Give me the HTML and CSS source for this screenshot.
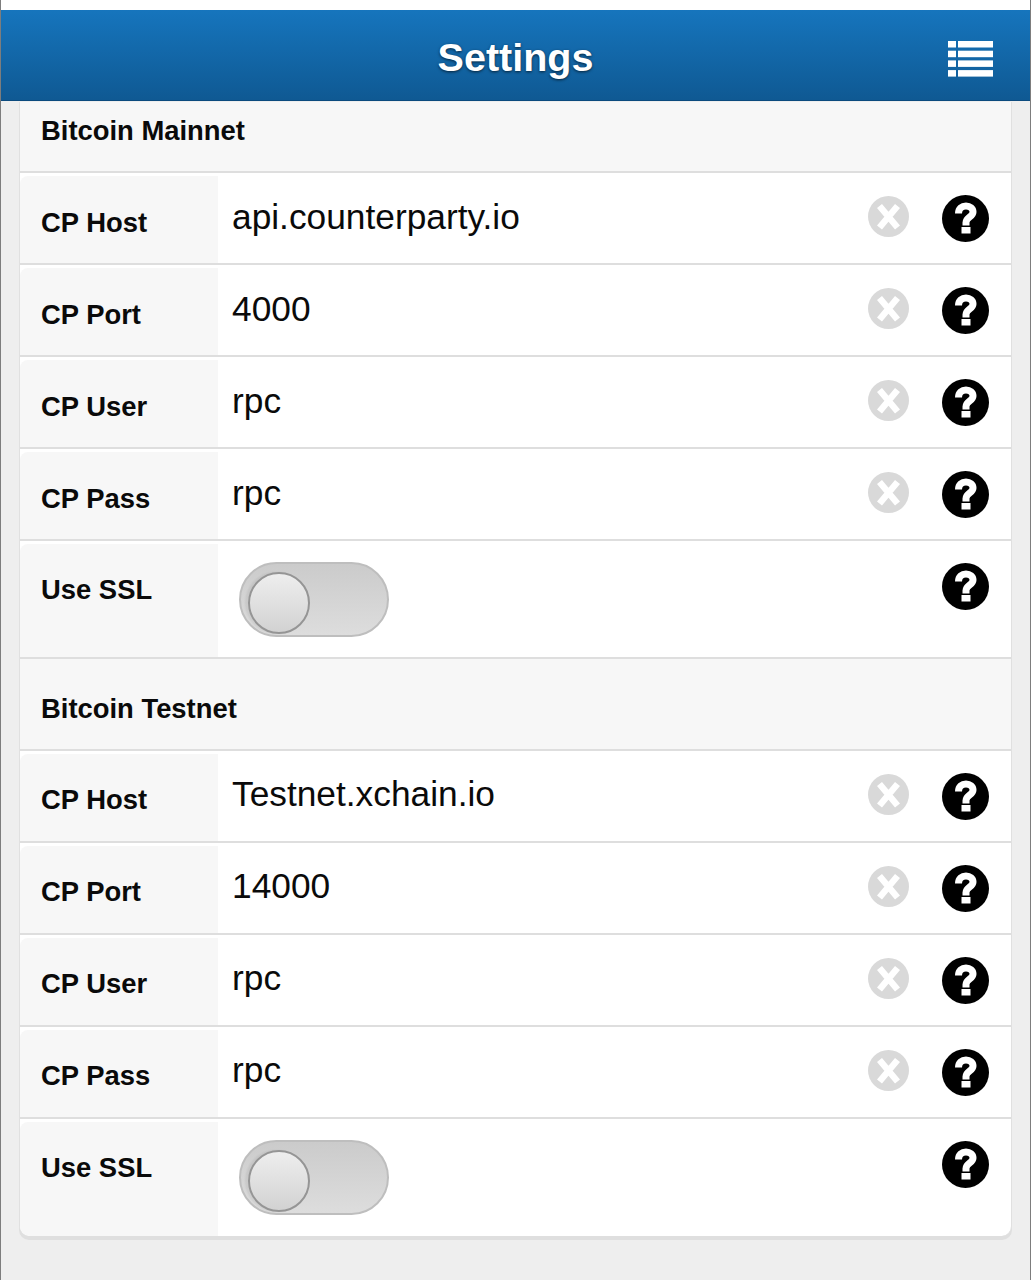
FILE: index.html
```html
<!DOCTYPE html>
<html lang="en">
<head>
    <meta charset="UTF-8">
    <meta name="viewport" content="width=device-width, initial-scale=1.0">
    <title>Settings</title>
    <link rel="stylesheet" href="styles.css">
</head>
<body>
    <svg class="defs" width="0" height="0">
        <symbol id="icon-clear" viewBox="0 0 41 41">
            <circle cx="20.5" cy="20.5" r="20.5" fill="#d9d9d9"/>
            <path d="M11.5 10 L29.5 31.5 M29.5 10 L11.5 31.5" stroke="#fff" stroke-width="6.5" fill="none"/>
        </symbol>
        <symbol id="icon-help" viewBox="0 0 47 47">
            <circle cx="23.5" cy="23.5" r="23.5" fill="#000"/>
            <path d="M16.5 18.5 C16.5 13.5 20 11 24 11 C28 11 31 13.5 31 17 C31 22 24 22 24 27.5 V30.5" stroke="#fff" stroke-width="7" fill="none"/>
            <rect x="19.5" y="32" width="9" height="6.5" fill="#fff"/>
        </symbol>
    </svg>

    <header class="topbar">
        <h1>Settings</h1>
        <svg class="list-icon" width="45" height="36" viewBox="0 0 45 36" fill="#fff">
            <rect x="0" y="0" width="8" height="6.5"/>
            <rect x="0" y="9.7" width="8" height="6.5"/>
            <rect x="0" y="19.4" width="8" height="6.5"/>
            <rect x="0" y="29.1" width="8" height="6.5"/>
            <rect x="10" y="0" width="35" height="6.5"/>
            <rect x="10" y="9.7" width="35" height="6.5"/>
            <rect x="10" y="19.4" width="35" height="6.5"/>
            <rect x="10" y="29.1" width="35" height="6.5"/>
        </svg>
    </header>

    <main class="card">
        <div class="section-title first">Bitcoin Mainnet</div>
        <div class="row">
            <div class="label">CP Host</div>
            <div class="value">api.counterparty.io</div>
            <svg class="clear"><use href="#icon-clear"/></svg>
            <svg class="help"><use href="#icon-help"/></svg>
        </div>
        <div class="row">
            <div class="label">CP Port</div>
            <div class="value">4000</div>
            <svg class="clear"><use href="#icon-clear"/></svg>
            <svg class="help"><use href="#icon-help"/></svg>
        </div>
        <div class="row">
            <div class="label">CP User</div>
            <div class="value">rpc</div>
            <svg class="clear"><use href="#icon-clear"/></svg>
            <svg class="help"><use href="#icon-help"/></svg>
        </div>
        <div class="row">
            <div class="label">CP Pass</div>
            <div class="value">rpc</div>
            <svg class="clear"><use href="#icon-clear"/></svg>
            <svg class="help"><use href="#icon-help"/></svg>
        </div>
        <div class="row row-toggle">
            <div class="label">Use SSL</div>
            <div class="value"><div class="toggle"><div class="knob"></div></div></div>
            <svg class="help"><use href="#icon-help"/></svg>
        </div>

        <div class="section-title">Bitcoin Testnet</div>
        <div class="row testnet">
            <div class="label">CP Host</div>
            <div class="value">Testnet.xchain.io</div>
            <svg class="clear"><use href="#icon-clear"/></svg>
            <svg class="help"><use href="#icon-help"/></svg>
        </div>
        <div class="row testnet">
            <div class="label">CP Port</div>
            <div class="value">14000</div>
            <svg class="clear"><use href="#icon-clear"/></svg>
            <svg class="help"><use href="#icon-help"/></svg>
        </div>
        <div class="row testnet">
            <div class="label">CP User</div>
            <div class="value">rpc</div>
            <svg class="clear"><use href="#icon-clear"/></svg>
            <svg class="help"><use href="#icon-help"/></svg>
        </div>
        <div class="row testnet">
            <div class="label">CP Pass</div>
            <div class="value">rpc</div>
            <svg class="clear"><use href="#icon-clear"/></svg>
            <svg class="help"><use href="#icon-help"/></svg>
        </div>
        <div class="row row-toggle last">
            <div class="label">Use SSL</div>
            <div class="value"><div class="toggle"><div class="knob"></div></div></div>
            <svg class="help"><use href="#icon-help"/></svg>
        </div>
    </main>
</body>
</html>
```

FILE: styles.css
```css
html, body {
    margin: 0;
    padding: 0;
}
body {
    height: 1270px;
    padding-top: 10px;
    background: linear-gradient(#fff 10px, #eeeeee 10px);
    border-left: 1px solid #7d7d7d;
    border-right: 1px solid #7d7d7d;
    font-family: "Liberation Sans", Arial, sans-serif;
    color: #0a0a0a;
    overflow: hidden;
}
.defs {
    display: block;
    height: 0;
}
.topbar {
    height: 90px;
    margin-left: -1px;
    margin-right: -1px;
    border-bottom: 1px solid #0b4a7e;
    background: linear-gradient(#1675bd, #0f5993);
    display: flex;
    align-items: center;
    justify-content: center;
    position: relative;
}
.topbar h1 {
    margin: 4px 0 0 0;
    font-size: 39.5px;
    font-weight: bold;
    color: #fff;
    text-shadow: 0 1px 3px rgba(0,0,0,0.65);
}
.list-icon {
    position: absolute;
    right: 38px;
    top: 31px;
}
.card {
    margin: 1px 18px 0 18px;
    background: #fff;
    border-radius: 0 0 10px 10px;
    border-left: 1px solid #e0e0e0;
    border-right: 1px solid #e0e0e0;
    box-shadow: 0 4px 0 #dfdfdf;
}
.section-title {
    height: 57px;
    padding: 33px 0 0 21px;
    background: #f7f7f7;
    border-bottom: 2px solid #dedede;
    font-size: 27.4px;
    line-height: 34px;
    font-weight: bold;
}
.section-title.first {
    padding-top: 12px;
    height: 57px;
}
.row {
    display: flex;
    height: 90px;
    border-bottom: 2px solid #dedede;
}
.label {
    width: 177px;
    margin-top: 3px;
    padding: 30px 0 0 21px;
    background: #f7f7f7;
    border-top-left-radius: 8px;
    font-size: 27.4px;
    line-height: 34px;
    font-weight: bold;
}
.value {
    flex: 1;
    padding: 22px 0 0 14px;
    font-size: 35.3px;
    line-height: 44px;
}
.clear {
    width: 41px;
    height: 41px;
    margin: 23px 33px 0 0;
}
.help {
    width: 47px;
    height: 47px;
    margin: 22px 22px 0 0;
}
.testnet .label {
    padding-top: 29px;
}
.testnet .value {
    padding-top: 21px;
}
.row-toggle {
    height: 116px;
}
.row-toggle .label {
    padding-top: 29px;
}
.row-toggle .value {
    padding: 21px 0 0 21px;
}
.row.last {
    border-bottom: none;
    height: 117px;
}
.row.last .label {
    border-radius: 8px 0 0 10px;
}
.toggle {
    width: 150px;
    height: 75px;
    box-sizing: border-box;
    border: 2px solid #bebebe;
    border-radius: 38px;
    background: linear-gradient(#cbcbcb, #dddddd);
    display: flex;
    align-items: center;
    padding-left: 7px;
}
.knob {
    width: 62px;
    height: 62px;
    box-sizing: border-box;
    border: 2px solid #959595;
    border-radius: 50%;
    background: linear-gradient(#eeeeee, #d2d2d2);
    box-shadow: -3px 0 2px rgba(0,0,0,0.06);
    margin-top: 6px;
}
```
